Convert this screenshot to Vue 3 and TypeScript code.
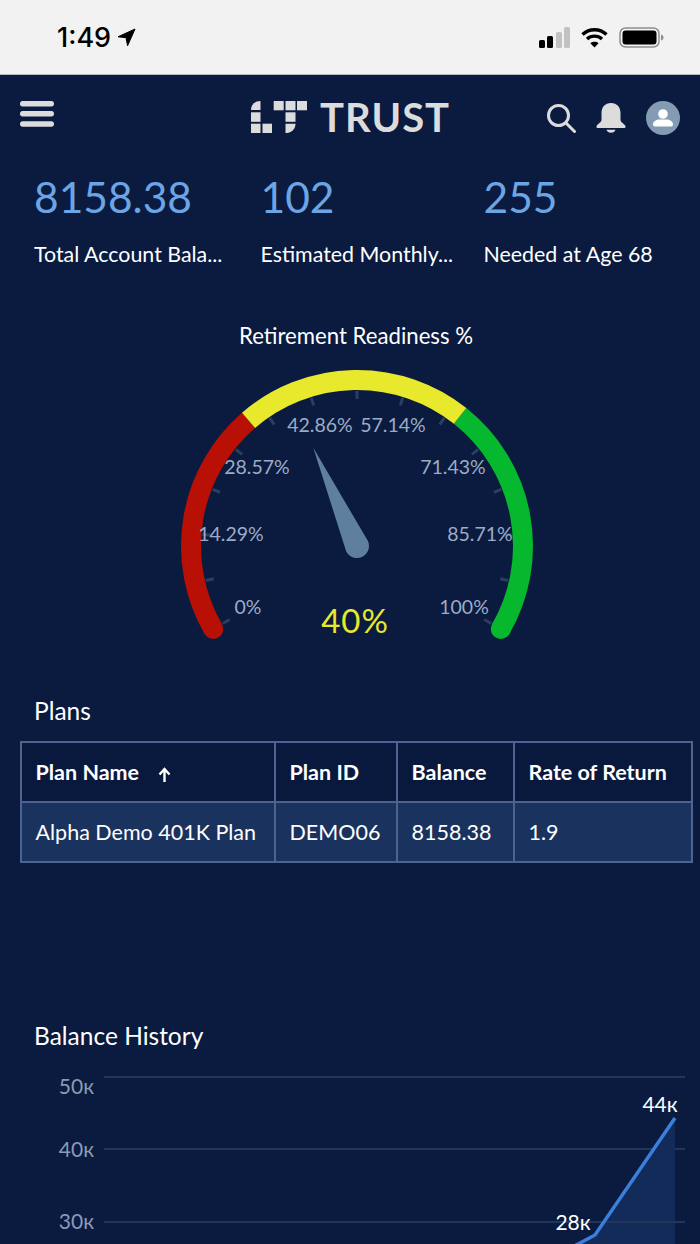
<script setup lang="ts">
import { computed } from 'vue'

const stats = [
  { value: '8158.38', label: 'Total Account Bala...', width: '226.5px' },
  { value: '102', label: 'Estimated Monthly...', width: '223px' },
  { value: '255', label: 'Needed at Age 68', width: '190px' },
]

const cx = 357
const cy = 546
const r = 166

function polar(pct: number, radius: number) {
  const a = ((210 - pct * 240) * Math.PI) / 180
  return { x: cx + radius * Math.cos(a), y: cy - radius * Math.sin(a) }
}

function arc(from: number, to: number) {
  const s = polar(from, r)
  const e = polar(to, r)
  const large = (to - from) * 240 > 180 ? 1 : 0
  return `M${s.x} ${s.y}A${r} ${r} 0 ${large} 1 ${e.x} ${e.y}`
}

const ticks = computed(() =>
  Array.from({ length: 15 }, (_, i) => {
    const a = polar(i / 14, 147)
    const b = polar(i / 14, 155)
    return { x1: a.x, y1: a.y, x2: b.x, y2: b.y }
  }),
)

const gaugeLabels = [
  { text: '0%', x: 248, y: 614 },
  { text: '14.29%', x: 231, y: 541 },
  { text: '28.57%', x: 257, y: 474 },
  { text: '42.86%', x: 320, y: 432 },
  { text: '57.14%', x: 393, y: 432 },
  { text: '71.43%', x: 453, y: 474 },
  { text: '85.71%', x: 480, y: 541 },
  { text: '100%', x: 464, y: 614 },
]

const needle = computed(() => {
  const tip = polar(0.4, 107.5)
  const a = ((210 - 0.4 * 240) * Math.PI) / 180
  const nx = Math.sin(a) * 12
  const ny = Math.cos(a) * 12
  return `M${tip.x} ${tip.y}L${cx + nx} ${cy + ny}A12 12 0 0 1 ${cx - nx} ${cy - ny}Z`
})

const plans = [{ name: 'Alpha Demo 401K Plan', id: 'DEMO06', balance: '8158.38', rate: '1.9' }]
const gridLines = [
  { y: 1077, labelY: 1094, label: '50к' },
  { y: 1149, labelY: 1157, label: '40к' },
  { y: 1222, labelY: 1229, label: '30к' },
]
</script>

<template>
  <div class="screen">
    <div class="status-bar">
      <div class="time">
        <span>1:49</span>
        <svg width="19" height="19" viewBox="0 0 19 19"><path d="M18 1 1 8.8l8 .9 1.600 8z" fill="#000" stroke="#000" stroke-width="1" stroke-linejoin="round" /></svg>
      </div>
      <div class="indicators">
        <svg width="32" height="21" viewBox="0 0 32 21">
          <rect x="1" y="13" width="6" height="8" rx="1.500" fill="#000" />
          <rect x="9" y="9" width="6" height="12" rx="1.500" fill="#000" />
          <rect x="18" y="5" width="6" height="16" rx="1.500" fill="#c2c2c2" />
          <rect x="26" y="0" width="6" height="21" rx="1.500" fill="#c2c2c2" />
        </svg>
        <svg width="27" height="21" viewBox="0 0 27 21" fill="none" stroke="#000" stroke-width="3.400">
          <path d="M1.500 7.500c6.800-6.400 17.200-6.400 24 0" />
          <path d="M6 12c4.300-3.800 10.700-3.800 15 0" />
          <path d="M13.500 20.500 9.400 16.200c2.400-1.900 5.800-1.900 8.200 0z" fill="#000" stroke="none" />
        </svg>
        <svg width="45" height="21" viewBox="0 0 45 21">
          <rect x="1" y="1" width="39" height="19" rx="5.500" fill="none" stroke="#8e8e8e" stroke-width="1.500" />
          <rect x="3.500" y="3.500" width="34" height="14" rx="3" fill="#000" />
          <path d="M42 7.500c1.800.5 2.500 1.500 2.500 3s-.7 2.500-2.500 3z" fill="#8e8e8e" />
        </svg>
      </div>
    </div>

    <header class="top-bar">
      <svg class="menu" width="34" height="26" viewBox="0 0 34 26" fill="#dcdcdc">
        <rect y="0" width="34" height="5.400" rx="2.700" />
        <rect y="10" width="34" height="5.400" rx="2.700" />
        <rect y="20.300" width="34" height="5.400" rx="2.700" />
      </svg>
      <div class="logo">
        <svg width="57" height="32" viewBox="0 0 57 32" fill="#dcdcdc">
          <path d="M0 9V8.500C0 3.800 4 0 9.500 0V9z" />
          <rect x="0" y="11.300" width="9.500" height="9.500" />
          <rect x="0" y="22.700" width="9.500" height="9.500" />
          <rect x="11.500" y="22.700" width="9.500" height="9.500" />
          <rect x="22.700" y="0" width="10" height="9.300" />
          <rect x="34.500" y="0" width="10" height="9.300" />
          <rect x="46" y="0" width="10" height="9.300" />
          <rect x="34.500" y="11.300" width="10" height="9.500" />
          <path d="M34.500 22.700h10c0 5.300-4.200 9.500-10 9.500z" />
        </svg>
        <span class="logo-word">TRUST</span>
      </div>
      <div class="actions">
        <svg width="30" height="30" viewBox="0 0 30 30" fill="none" stroke="#dcdcdc" stroke-width="3">
          <circle cx="12.500" cy="12.500" r="10" />
          <path d="m20 20 8.500 8.500" stroke-linecap="round" />
        </svg>
        <svg width="30" height="30" viewBox="0 0 30 30" fill="#dcdcdc">
          <path d="M15 0c-6 0-9.500 4.300-9.500 10v6.500C5.500 20 1 21 .5 23.200c-.3 1 .3 1.800 1.300 1.800h26.400c1 0 1.600-.8 1.300-1.800C29 21 24.500 20 24.500 16.500V10C24.500 4.300 21 0 15 0z" />
          <path d="M10.500 26.700h9c-.5 2-2.300 3-4.500 3s-4-1-4.500-3z" />
        </svg>
        <div class="avatar">
          <svg width="20" height="18" viewBox="0 0 20 18" fill="#fff">
            <circle cx="10" cy="5" r="4.800" />
            <path d="M0 15.500C0 12 3.800 10.500 6 10.500h8c2.200 0 6 1.500 6 5 0 1.300-.8 2-2 2H2c-1.200 0-2-.7-2-2z" />
          </svg>
        </div>
      </div>
    </header>

    <section class="stats">
      <div v-for="s in stats" :key="s.label" class="stat" :style="{ width: s.width }">
        <div class="stat-value">{{ s.value }}</div>
        <div class="stat-label">{{ s.label }}</div>
      </div>
    </section>

    <h2 class="gauge-title">Retirement Readiness %</h2>
    <svg class="gauge" width="700" height="310" viewBox="0 350 700 310">
      <line v-for="(t, i) in ticks" :key="i" v-bind="t" stroke="#2b3e60" stroke-width="3" />
      <path :d="arc(0, 0.33)" fill="none" stroke="#b81004" stroke-width="20" />
      <path :d="arc(0.66, 1)" fill="none" stroke="#05b82e" stroke-width="20" />
      <path :d="`M${polar(0, r).x} ${polar(0, r).y}l.01 0`" fill="none" stroke="#b81004" stroke-width="20" stroke-linecap="round" />
      <path :d="`M${polar(1, r).x} ${polar(1, r).y}l.01 0`" fill="none" stroke="#05b82e" stroke-width="20" stroke-linecap="round" />
      <path :d="arc(0.33, 0.66)" fill="none" stroke="#e8e82c" stroke-width="20" />
      <text v-for="l in gaugeLabels" :key="l.text" class="gauge-label" :x="l.x" :y="l.y" text-anchor="middle">{{ l.text }}</text>
      <path :d="needle" fill="#5f7f9f" />
      <text class="gauge-value" x="355" y="633" text-anchor="middle">40%</text>
    </svg>

    <h2 class="section-title plans-title">Plans</h2>
    <table class="plans">
      <colgroup>
        <col style="width: 254px" />
        <col style="width: 122px" />
        <col style="width: 117px" />
        <col />
      </colgroup>
      <thead>
        <tr>
          <th>
            Plan Name
            <svg class="sort" width="13" height="15" viewBox="0 0 13 15" fill="none" stroke="#fff" stroke-width="2.400">
              <path d="M6.500 15V2.500M1.500 7.500l5-5.500 5 5.500" />
            </svg>
          </th>
          <th>Plan ID</th>
          <th>Balance</th>
          <th>Rate of Return</th>
        </tr>
      </thead>
      <tbody>
        <tr v-for="p in plans" :key="p.id">
          <td>{{ p.name }}</td>
          <td>{{ p.id }}</td>
          <td>{{ p.balance }}</td>
          <td>{{ p.rate }}</td>
        </tr>
      </tbody>
    </table>

    <h2 class="section-title history-title">Balance History</h2>
    <svg class="chart" width="700" height="184" viewBox="0 1060 700 184">
      <g v-for="g in gridLines" :key="g.label">
        <line x1="104" x2="685" :y1="g.y" :y2="g.y" stroke="#22365a" stroke-width="2" />
        <text class="axis-label" x="94" :y="g.labelY" text-anchor="end">{{ g.label }}</text>
      </g>
      <path d="M675 1118 595 1235 565 1251V1300H675z" fill="#132b59" />
      <line x1="104" x2="685" y1="1222" y2="1222" stroke="#22365a" stroke-width="2" />
      <path d="M675 1118 595 1235 565 1251" fill="none" stroke="#3a7fdb" stroke-width="3.500" />
      <text class="point-label" x="660" y="1112" text-anchor="middle">44к</text>
      <text class="point-label" x="573" y="1230" text-anchor="middle">28к</text>
    </svg>
  </div>
</template>

<style>
html,
body {
  margin: 0;
  background: #0a1b3f;
}
</style>

<style scoped>
.screen {
  width: 700px;
  height: 1244px;
  overflow: hidden;
  background: #0a1b3f;
  font-family: Lato, "Open Sans", sans-serif;
  color: #fff;
}

.status-bar {
  height: 75px;
  box-sizing: border-box;
  background: #f2f2f2;
  border-bottom: 1px solid #b5b8bf;
  padding: 0 36px 0 57px;
  display: flex;
  justify-content: space-between;
  align-items: center;
}

.time {
  display: flex;
  align-items: center;
  gap: 6px;
  font-family: Inter, sans-serif;
  font-weight: 500;
  font-size: 27px;
  color: #000;
}

.indicators {
  display: flex;
  align-items: center;
  gap: 11px;
}

.top-bar {
  height: 90px;
  padding: 26px 20px 0;
  box-sizing: border-box;
  display: grid;
  grid-template-columns: 200px 1fr 140px;
  align-items: start;
}

.logo {
  display: flex;
  align-items: center;
  gap: 12px;
  margin-left: 31px;
}

.logo-word {
  font-size: 40px;
  line-height: 32px;
  font-weight: 700;
  color: #dcdcdc;
  letter-spacing: 1px;
}

.actions {
  display: flex;
  align-items: center;
  gap: 20px;
  justify-content: flex-end;
}

.avatar {
  width: 34px;
  height: 34px;
  border-radius: 50%;
  background: #849bb4;
  display: flex;
  align-items: center;
  justify-content: center;
}

.stats {
  display: flex;
  padding: 7px 0 0 34px;
}

.stat {
  flex: none;
}

.stat-value {
  font-size: 42.5px;
  line-height: 50px;
  color: #6ca5e6;
}

.stat-label {
  margin-top: 18px;
  font-size: 21.4px;
  line-height: 28px;
  white-space: nowrap;
}

.gauge-title {
  margin: 54px 0 0 12px;
  text-align: center;
  font-size: 22.2px;
  line-height: 28px;
  font-weight: 400;
}

.gauge {
  display: block;
}

.gauge-label {
  font-size: 19.5px;
  fill: #9dacc6;
}

.gauge-value {
  font-size: 33px;
  letter-spacing: 1px;
  fill: #e8e82c;
}

.section-title {
  margin: 0;
  padding-left: 34px;
  font-size: 24.5px;
  line-height: 30px;
  font-weight: 400;
}

.plans-title {
  margin-top: 36px;
}

.plans {
  margin: 15px 0 0 20px;
  width: 673px;
  border-collapse: collapse;
  table-layout: fixed;
  font-size: 21.5px;
  border: 2px solid #4c648f;
}

.plans th,
.plans td {
  border: 2px solid #4c648f;
  height: 60px;
  padding: 0 13.5px;
  text-align: left;
  white-space: nowrap;
  box-sizing: border-box;
}

.plans th {
  font-weight: 700;
  background: #09193d;
}

.plans td {
  background: #1a335e;
}

.sort {
  margin-left: 14px;
  vertical-align: -2px;
}

.history-title {
  margin-top: 158px;
}

.chart {
  display: block;
  margin-top: 9px;
}

.axis-label {
  font-size: 21px;
  fill: #8b9ab5;
}

.point-label {
  font-size: 21px;
  fill: #fff;
}
</style>
